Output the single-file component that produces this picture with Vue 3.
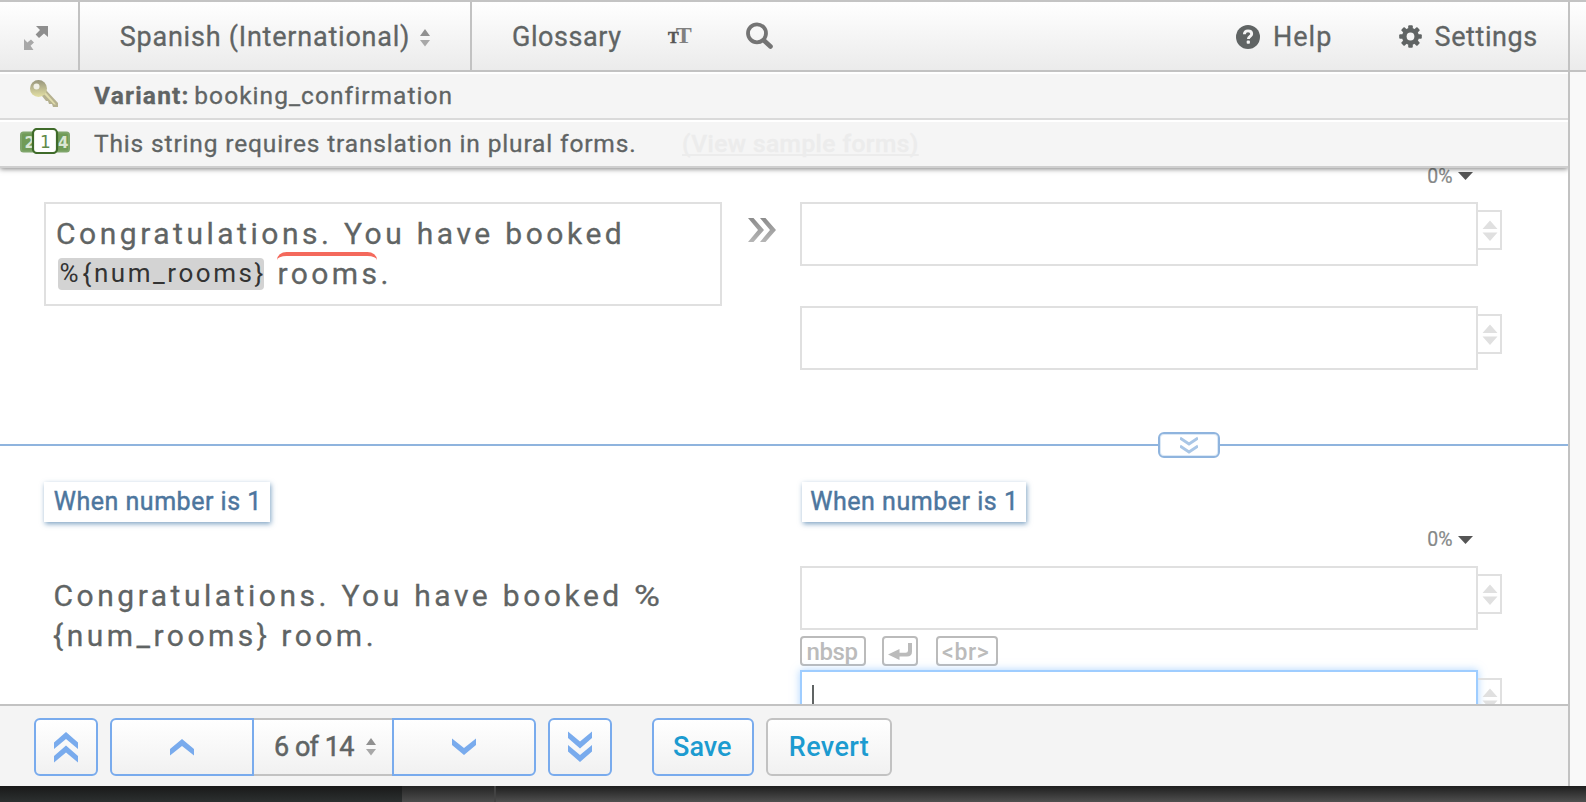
<script setup>
const targets = ['general-a', 'general-b']
</script>

<template>
  <div class="page">
    <div class="shell">
      <main class="editor">
        <header class="toolbar">
          <div class="expand">
            <svg width="26" height="26" viewBox="0 0 26 26">
              <path d="M13 1h12v11l-4-3.6-5 4.6-3.4-3.4L17 5z" fill="#8e8e8e" />
              <path d="M1 14l3.4 3.4L8 14.500l3 3L7.500 20.800l3 4.2H1z" fill="#a8a8a8" />
            </svg>
          </div>
          <div class="language">
            <span class="t-lang">Spanish (International)</span>
            <svg class="sort" width="10" height="18" viewBox="0 0 10 18">
              <path d="M5 0l5 7H0z" fill="#909090" /><path d="M0 11h10l-5 6.5z" fill="#a8a8a8" />
            </svg>
          </div>
          <span class="t-glossary">Glossary</span>
          <span class="tt"><span class="tt-small">T</span><span class="tt-big">T</span></span>
          <svg class="search" width="28" height="28" viewBox="0 0 28 28" fill="none" stroke="#747474">
            <circle cx="11" cy="11.3" r="9" stroke-width="3.8" />
            <path d="M18 18.5l6.500 6" stroke-width="4.600" stroke-linecap="round" />
          </svg>
          <svg class="help-icon" width="24" height="24" viewBox="0 0 24 24">
            <circle cx="12" cy="12" r="12" fill="#606464" />
            <path d="M8.4 9.2C8.5 6.9 10 5.9 12 5.9c2.200 0 3.700 1.200 3.700 3 0 2.400-3.300 2.500-3.300 5.100" fill="none" stroke="#f5f5f5" stroke-width="2.900" />
            <rect x="10.700" y="15.600" width="3.200" height="3.200" rx=".8" fill="#f5f5f5" />
          </svg>
          <span class="t-help">Help</span>
          <svg class="gear" width="23" height="23" viewBox="-11.500 -11.500 23 23">
            <g fill="#606464">
              <rect v-for="n in 4" :key="n" x="-2.300" y="-11.300" width="4.600" height="22.600" rx="1" :transform="`rotate(${n * 45})`" />
            </g>
            <circle r="6.200" fill="none" stroke="#606464" stroke-width="4.600" />
            <circle r="3.900" fill="#f5f5f5" />
          </svg>
          <span class="t-settings">Settings</span>
        </header>

        <div class="info">
          <div class="info-icon">
            <svg class="key" width="28" height="28" viewBox="0 0 28 28">
              <defs>
                <linearGradient id="keyFill" x1="0" y1="0" x2="0" y2="1">
                  <stop offset="0" stop-color="#97957c" /><stop offset="1" stop-color="#e4e0a4" />
                </linearGradient>
              </defs>
              <path d="M12 12l3.500-2.500L28 23v4h-5l-1-3h-3l-1-3h-2l-4-5z" fill="#b5b18f" />
              <path d="M12.500 12.500l2-1.500L26 24.500h-2z" fill="#e0dcab" />
              <circle cx="8.500" cy="8.500" r="8.500" fill="url(#keyFill)" />
              <circle cx="6.500" cy="6.500" r="3" fill="#f1f0e6" />
            </svg>
          </div>
          <span class="t-variant">Variant:</span><span class="t-confirm">booking_confirmation</span>
        </div>
        <div class="info last">
          <div class="info-icon">
            <svg class="plural" width="50" height="26" viewBox="0 0 50 26">
              <rect x="1" y="4.500" width="48" height="19" rx="2.500" fill="#709b57" stroke="#7fa56b" stroke-width="2" />
              <text x="4.500" y="20" class="side">2</text><text x="38" y="20" class="side">4</text>
              <rect x="13" y="1" width="24" height="24" rx="4" fill="#fff" stroke="#3f6b2a" stroke-width="2.200" />
              <text x="20" y="20" class="mid">1</text>
            </svg>
          </div>
          <span class="t-plural">This string requires translation in plural forms.</span>
          <a class="sample">(View sample forms)</a>
        </div>

        <div class="content">
          <section class="unit first">
            <div>
              <div class="source">
                <div class="line l1">Congratulations. You have booked</div>
                <div class="line l2"><span class="token"><span class="pct">%</span>{num_rooms}</span> <span class="term">rooms</span>.</div>
              </div>
            </div>
            <div class="copy">
              <svg width="28" height="24" viewBox="0 0 28 24">
                <defs>
                  <linearGradient id="copyFill" x1="0" y1="0" x2="0" y2="1">
                    <stop offset="0" stop-color="#8c8c8c" /><stop offset="1" stop-color="#b6b6b6" />
                  </linearGradient>
                </defs>
                <path d="M0 0h5.500L16 12 5.500 24H0l10-12zM12 0h5.500L28 12 17.500 24H12l10-12z" fill="url(#copyFill)" />
              </svg>
            </div>
            <div class="answers">
              <div class="meter"><span>0%</span><svg width="15" height="8" viewBox="0 0 15 8"><path d="M0 0h15L7.500 8z" fill="#555" /></svg></div>
              <div v-for="t in targets" :key="t" class="row">
                <div class="field"></div>
                <div class="spin"><svg width="16" height="22" viewBox="0 0 16 22"><path d="M8 .5l7.500 8.500H.5zM.5 12.500h15L8 21z" fill="#e0e0e0" /></svg></div>
              </div>
            </div>
          </section>

          <div class="divider">
            <div class="badge">
              <svg width="18" height="18" viewBox="0 0 18 18" fill="none" stroke="#a9c6e6" stroke-width="2.800"><path d="M0 2l9 6 9-6M0 10l9 6 9-6" /></svg>
            </div>
          </div>

          <section class="unit second">
            <div>
              <div class="label"><span>When number is 1</span></div>
              <div class="plain">
                <div class="line p1">Congratulations. You have booked <span class="wide-pct">%</span></div>
                <div class="line p2">{num_rooms} room.</div>
              </div>
            </div>
            <div></div>
            <div class="answers">
              <div class="label right"><span>When number is 1</span></div>
              <div class="meter"><span>0%</span><svg width="15" height="8" viewBox="0 0 15 8"><path d="M0 0h15L7.500 8z" fill="#555" /></svg></div>
              <div class="row">
                <div class="field"></div>
                <div class="spin"><svg width="16" height="22" viewBox="0 0 16 22"><path d="M8 .5l7.500 8.500H.5zM.5 12.500h15L8 21z" fill="#e0e0e0" /></svg></div>
              </div>
              <div class="chips">
                <span class="chip nbsp">nbsp</span>
                <span class="chip enter"><svg width="24" height="18" viewBox="0 0 24 18"><path d="M0 11.500L11.500 6v3.700h6.200q2.300 0 2.300-2.300V0h4v8.500q0 5-5 5h-7.500V17z" fill="#bbb" /></svg></span>
                <span class="chip br">&lt;br&gt;</span>
              </div>
              <div class="row">
                <div class="field focus"><i class="caret"></i></div>
                <div class="spin"><svg width="16" height="22" viewBox="0 0 16 22"><path d="M8 .5l7.500 8.500H.5zM.5 12.500h15L8 21z" fill="#e0e0e0" /></svg></div>
              </div>
            </div>
          </section>
        </div>

        <footer class="actions">
          <div class="btn square">
            <svg width="24" height="30" viewBox="0 0 24 30" fill="#79abed"><path d="M0 10.500L12 0l12 10.500V17L12 7 0 17zM0 24L12 13.500 24 24v6.500l-12-10-12 10z" /></svg>
          </div>
          <div class="group">
            <div class="btn prev"><svg width="24" height="16" viewBox="0 0 24 16" fill="#79abed"><path d="M0 10L12 0l12 10v6.500L12 7 0 16.500z" /></svg></div>
            <div class="count">
              <span>6 of 14</span>
              <svg width="10" height="18" viewBox="0 0 10 18"><path d="M5 0l5 7H0z" fill="#909090" /><path d="M0 11h10l-5 6.500z" fill="#a8a8a8" /></svg>
            </div>
            <div class="btn next"><svg width="24" height="16" viewBox="0 0 24 16" fill="#79abed"><path d="M0 -.5l12 9.500L24-.5V6L12 16 0 6z" /></svg></div>
          </div>
          <div class="btn square">
            <svg width="24" height="30" viewBox="0 0 24 30" fill="#79abed"><path d="M0 -.5l12 10 12-10V6L12 16.500 0 6zM0 13l12 10 12-10v6.500L12 30 0 19.500z" /></svg>
          </div>
          <div class="btn save"><span>Save</span></div>
          <div class="btn revert"><span>Revert</span></div>
        </footer>
      </main>
      <aside class="gutter"><div class="gutter-top"></div></aside>
    </div>
    <div class="backdrop"><div class="left"></div><div class="mid-strip"></div><div class="rest"></div></div>
  </div>
</template>

<style>
body { overflow: hidden; }
</style>

<style scoped>
* { box-sizing: border-box; }
.page { width: 1586px; height: 802px; display: flex; flex-direction: column; background: #fff; color: #606464; font-family: Roboto, "Liberation Sans", sans-serif; white-space: nowrap; -webkit-text-stroke: 0.3px; }
svg { display: block; flex: none; }
.shell { height: 786px; display: flex; border-top: 2px solid #c4c4c4; }
.editor { width: 1570px; display: flex; flex-direction: column; border-right: 2px solid #c2c2c2; }
.gutter { flex: 1; background: #f9f9f9; }
.gutter-top { height: 70px; border-bottom: 2px solid #c2c2c2; background: linear-gradient(#fff, #ebebeb); }

.toolbar { flex: none; height: 70px; display: flex; align-items: center; padding-top: 1px; border-bottom: 2px solid #c2c2c2; background: linear-gradient(#fff, #ebebeb); font-size: 27px; line-height: 32px; }
.expand { width: 80px; height: 68px; margin-top: -1px; padding: 23px 0 0 23px; border-right: 2px solid #c2c2c2; }
.language { width: 392px; height: 68px; margin-top: -1px; padding: 2px 0 0 39.700px; display: flex; align-items: center; border-right: 2px solid #c2c2c2; }
.t-lang { width: 300.300px; letter-spacing: 0.780px; }
.sort { margin-top: 1px; }
.t-glossary { width: 156px; margin-left: 40px; letter-spacing: 0.560px; }
.tt { display: flex; align-items: baseline; width: 78px; font-family: "Liberation Serif", serif; font-weight: 700; line-height: 24px; color: #6c6c6c; -webkit-text-stroke: 0; }
.tt-small { font-size: 16px; color: #555; -webkit-text-stroke: 0.5px; }
.tt-big { font-size: 24px; margin-left: -3px; color: #808080; font-weight: 700; }
.search { margin: -2px 462px 0 0; }
.t-help { width: 126px; margin-left: 13px; letter-spacing: 1px; }
.t-settings { margin-left: 12.500px; letter-spacing: 0.600px; }

.info { flex: none; height: 48px; display: flex; align-items: center; border-top: 2px solid #fff; border-bottom: 2px solid #dadada; background: #f5f5f5; font-size: 24.500px; line-height: 30px; }
.info.last { position: relative; z-index: 2; border-bottom-color: #cfcfcf; box-shadow: 0 1px 5px rgba(0, 0, 0, 0.500); clip-path: inset(0 0 -12px 0); }
.info-icon { width: 94px; height: 44px; padding-left: 20px; }
.key { margin: 6px 0 0 10px; }
.plural { margin-top: 6px; }
.plural text { font-family: "DejaVu Sans", sans-serif; -webkit-text-stroke: 0; }
.side { font-size: 15px; font-weight: 700; fill: #dbe6d4; }
.mid { font-size: 17px; fill: #5f8a49; }
.t-variant { width: 100.300px; font-weight: 700; letter-spacing: 1.200px; }
.t-confirm { letter-spacing: 1.050px; }
.t-plural { width: 588px; letter-spacing: 0.850px; }
.sample { font-weight: 500; letter-spacing: 0.450px; color: #ececec; text-decoration: underline; text-decoration-thickness: 2px; text-underline-offset: 2px; text-decoration-skip-ink: none; }

.content { flex: 1; min-height: 0; overflow: hidden; }
.unit { display: grid; grid-template-columns: 678px 78px 702px; padding-left: 44px; }
.first { height: 276px; }
.source { margin-top: 34px; height: 104px; padding: 10px 0 0 9px; border: 2px solid #e0e0e0; }
.line { height: 40px; font-size: 30px; line-height: 40px; }
.l1 { padding-left: 1px; letter-spacing: 3.520px; word-spacing: 0.600px; }
.l2 { padding-left: 3px; letter-spacing: 3.450px; }
.token { display: inline-block; width: 206px; height: 32px; padding-left: 1.500px; border-radius: 4px; background: #d3d3d3; color: #333; font-size: 26px; line-height: 30px; letter-spacing: 2.550px; vertical-align: 2px; -webkit-text-stroke: 0; }
.pct { margin-right: 1.500px; }
.term { position: relative; margin-left: 2.500px; }
.term::before { content: ""; position: absolute; left: 0; top: -4px; width: 100px; height: 12px; border-top: 4px solid #f4695c; border-radius: 12px / 10px; }
.copy { padding: 50px 0 0 26px; }
.meter { height: 34px; display: flex; justify-content: flex-end; align-items: flex-start; gap: 5px; padding-right: 29.500px; font-size: 19.500px; line-height: 15px; color: #858888; -webkit-text-stroke: 0.200px; }
.meter svg { margin-top: 4px; }
.first .meter span { margin-top: 1px; }
.row { display: flex; height: 64px; }
.first .row { margin-bottom: 40px; }
.field { width: 678px; height: 64px; border: 2px solid #e0e0e0; background: #fff; }
.focus { border-color: #9fcdff; box-shadow: 0 0 8px rgba(130, 190, 255, 0.650); }
.caret { display: block; width: 2px; height: 36px; margin: 13px 0 0 10px; background: #606464; }
.spin { width: 24px; height: 40px; margin-top: 8px; padding: 8px 0 0 4px; border: 2px solid #e0e0e0; border-left: 0; }

.divider { position: relative; height: 2px; background: #8fb4de; }
.badge { position: absolute; left: 1158px; top: -12px; width: 62px; height: 26px; display: flex; align-items: center; justify-content: center; border: 2px solid #8fb4de; border-radius: 6px; background: #fff; box-shadow: inset 0 0 0 1px #dce9f6; }
.second { padding-top: 36px; }
.label { width: 226px; height: 40px; padding-left: 9.700px; font-size: 25px; line-height: 40px; letter-spacing: 0.520px; color: #4d769e; background: #fff; box-shadow: 1px 2px 5px rgba(60, 115, 165, 0.650); -webkit-text-stroke: 0.450px; }
.label.right { width: 224px; margin: 0 0 10px 2px; padding-left: 8.300px; }
.plain { padding: 53.700px 0 0 9px; }
.p1 { padding-left: 0.500px; letter-spacing: 3.520px; word-spacing: 0.600px; }
.wide-pct { display: inline-block; transform: scaleX(1.180); transform-origin: 0 50%; }
.p2 { letter-spacing: 3.480px; }
.chips { display: flex; padding: 6px 0 4px; }
.chip { height: 30px; border: 2px solid #bbb; border-radius: 4px; color: #bbb; font-weight: 500; font-size: 24px; line-height: 28px; -webkit-text-stroke: 0; }
.nbsp { width: 66px; padding-left: 4.500px; letter-spacing: -0.400px; }
.enter { width: 36px; margin-left: 16px; padding: 5px 0 0 4px; }
.br { width: 62px; margin-left: 18px; padding-left: 4px; font-size: 23px; line-height: 30px; letter-spacing: 0.700px; }

.actions { position: relative; z-index: 3; flex: none; height: 82px; display: flex; padding: 12px 0 0 34px; border-top: 2px solid #c2c2c2; background: #f4f4f4; font-size: 27px; line-height: 32px; }
.btn { height: 58px; display: flex; align-items: center; justify-content: center; border: 2px solid #79abed; border-radius: 6px; background: linear-gradient(#fff, #f1f1f1); color: #1c9bd0; font-weight: 500; -webkit-text-stroke: 0; }
.btn svg { overflow: visible; }
.square { width: 64px; }
.group { display: flex; margin: 0 12px; }
.prev { width: 144px; border-radius: 6px 0 0 6px; }
.next { width: 144px; border-radius: 0 6px 6px 0; }
.count { width: 138px; height: 58px; display: flex; align-items: center; padding-left: 20px; border: solid #c2c2c2; border-width: 2px 0; background: linear-gradient(#fff, #f1f1f1); }
.count span { width: 92px; letter-spacing: -0.900px; word-spacing: 1px; -webkit-text-stroke: 0.500px; }
.save { width: 102px; margin-left: 40px; padding-right: 1.500px; }
.revert { width: 126px; margin-left: 12px; border-color: #c2c2c2; letter-spacing: 0.350px; }

.backdrop { height: 16px; display: flex; }
.left { width: 402px; background: linear-gradient(#191919, #2c3030); }
.mid-strip { width: 94px; border-right: 2px solid #424242; background: linear-gradient(#242424, #4c4c4c); }
.rest { flex: 1; background: linear-gradient(#1e1e1e, #4f4f4f); }
</style>
